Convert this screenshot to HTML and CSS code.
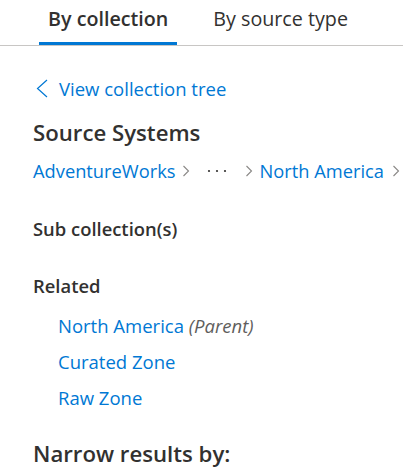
FILE: index.html
```html
<!DOCTYPE html>
<html>
<head>
<meta charset="utf-8">
<link rel="stylesheet" href="styles.css">
</head>
<body>
<div class="tabs">
  <div class="tab active">By collection</div>
  <div class="tab">By source type</div>
</div>
<div class="content">
  <a class="back">
    <svg class="back-icon" width="12" height="19" viewBox="0 0 12 19"><path d="M11 1 L1.5 9.5 L11 18" fill="none" stroke="#0078d4" stroke-width="1.2"/></svg>
    <span>View collection tree</span>
  </a>
  <h2 class="title">Source Systems</h2>
  <div class="crumbs">
    <span class="crumb">AdventureWorks</span>
    <svg class="chev c1" width="8" height="12" viewBox="0 0 8 12"><path d="M1.5 1 L6.5 6 L1.5 11" fill="none" stroke="#8a8886" stroke-width="1.1"/></svg>
    <svg class="dots" width="20" height="4" viewBox="0 0 20 4"><circle cx="2" cy="2" r="1.1" fill="#323130"/><circle cx="10" cy="2" r="1.1" fill="#323130"/><circle cx="18" cy="2" r="1.1" fill="#323130"/></svg>
    <svg class="chev c2" width="8" height="12" viewBox="0 0 8 12"><path d="M1.5 1 L6.5 6 L1.5 11" fill="none" stroke="#8a8886" stroke-width="1.1"/></svg>
    <span class="crumb">North America</span>
    <svg class="chev c3" width="8" height="12" viewBox="0 0 8 12"><path d="M1.5 1 L6.5 6 L1.5 11" fill="none" stroke="#8a8886" stroke-width="1.1"/></svg>
  </div>
  <h3 class="sub">Sub collection(s)</h3>
  <h3 class="sub related">Related</h3>
  <ul class="links">
    <li><span class="link">North America</span> <em class="note">(Parent)</em></li>
    <li><span class="link">Curated Zone</span></li>
    <li><span class="link">Raw Zone</span></li>
  </ul>
  <h2 class="narrow">Narrow results by:</h2>
</div>
</body>
</html>
```
FILE: styles.css
```css
html, body { margin: 0; padding: 0; background: #fff; }
body { font-family: "Open Sans", "Noto Sans", sans-serif; color: #323130; width: 403px; height: 476px; overflow: hidden; }
.tabs { display: flex; gap: 27px; padding-left: 39px; border-bottom: 1px solid #c8c6c4; height: 45px; }
.tab { font-size: 19.7px; padding: 5px 9px 0; box-sizing: border-box; height: 45px; border-bottom: 3px solid transparent; white-space: nowrap; line-height: 28px; }
.tab.active { font-weight: 600; border-bottom-color: #0078d4; }
.content { padding-left: 33px; }
.back { display: flex; align-items: center; gap: 11px; color: #0078d4; font-size: 18.5px; margin-top: 27px; height: 30px; margin-left: 3px; }
.back-icon { display: block; }
.title { font-size: 22.2px; font-weight: 600; margin: 16px 0 0; line-height: 28px; }
.crumbs { display: flex; align-items: center; margin-top: 9px; font-size: 18.3px; height: 28px; color: #0078d4; white-space: nowrap; }
.chev { display: block; flex: none; }
.c1 { margin: 1px 0 0 7px; }
.dots { display: block; flex: none; margin: 2px 0 0 17px; }
.c2 { margin: 1px 6px 0 18px; }
.c3 { margin: 1px 0 0 8px; }
.sub { font-size: 18.4px; font-weight: 600; margin: 33px 0 0; line-height: 24px; }
.related { margin-top: 33px; }
.links { list-style: none; margin: 10px 0 0; padding: 0 0 0 25px; }
.links li { font-size: 18.5px; line-height: 36px; }
.link { color: #0078d4; }
.note { color: #605e5c; }
.narrow { font-size: 22.2px; font-weight: 600; margin: 24px 0 0; line-height: 28px; }
```
